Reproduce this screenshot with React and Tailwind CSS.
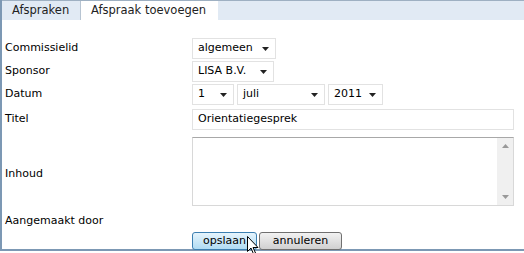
import React from "react";

const font = { fontFamily: '"DejaVu Sans", Verdana, sans-serif' };

function Select({ value, w }) {
  return (
    <div className={`flex h-[21px] items-center justify-between border border-[#e2e2e2] bg-white pl-[5px] pr-[6px] text-[11px] text-black ${w}`}>
      <span>{value}</span>
      <svg width="7" height="4" viewBox="0 0 7 4"><path d="M0 0h7L3.5 4z" fill="#222" /></svg>
    </div>
  );
}

export default function App() {
  return (
    <div className="h-[253px] w-[524px] overflow-hidden bg-white" style={font}>
      <div className="flex h-[251px] flex-col border-b-[2px] border-l-[2px] border-[#7c98b4]">
        <div className="flex h-[20px] items-end border-t border-[#9eb0c2] bg-[#e1eaf4]">
          <div className="flex h-[19px] w-[79px] items-center border-r border-[#b7c4d2] pl-[10px] text-[11.5px] text-[#222]">Afspraken</div>
          <div className="flex h-[19px] w-[137px] items-center bg-white pl-[10px] text-[11.5px] text-[#222]">Afspraak toevoegen</div>
        </div>
        <div className="flex flex-col pl-[3px] pt-[17px] text-[11px] text-black">
          <div className="flex h-[23px] items-center">
            <div className="w-[187px]">Commissielid</div>
            <Select value="algemeen" w="w-[84px]" />
          </div>
          <div className="flex h-[23px] items-center">
            <div className="w-[187px]">Sponsor</div>
            <Select value="LISA B.V." w="w-[82px]" />
          </div>
          <div className="flex h-[23px] items-center">
            <div className="w-[187px]">Datum</div>
            <div className="flex gap-[3px]">
              <Select value="1" w="w-[42px]" />
              <Select value="juli" w="w-[88px]" />
              <Select value="2011" w="w-[55px]" />
            </div>
          </div>
          <div className="flex h-[26px] items-center">
            <div className="w-[187px]">Titel</div>
            <div className="flex h-[21px] w-[322px] items-center border border-[#e2e2e2] pl-[5px]">Orientatiegesprek</div>
          </div>
          <div className="flex h-[79px] items-center">
            <div className="w-[187px] pt-[6px]">Inhoud</div>
            <div className="flex h-[69px] w-[322px] border border-[#d8d8d8] border-t-[#a8a8a8]">
              <div className="flex-1" />
              <div className="flex w-[16px] flex-col items-center justify-between bg-[#f0f0f0] py-[6px]">
                <svg width="7" height="4" viewBox="0 0 7 4"><path d="M0 4h7L3.5 0z" fill="#999" /></svg>
                <svg width="7" height="4" viewBox="0 0 7 4"><path d="M0 0h7L3.5 4z" fill="#999" /></svg>
              </div>
            </div>
          </div>
          <div className="flex h-[21px] items-center">
            <div>Aangemaakt door</div>
          </div>
          <div className="flex gap-[2px] pl-[187px]">
            <div className="relative flex h-[18px] w-[65px] items-center justify-center rounded-[3px] border border-[#3c7fb1] bg-gradient-to-b from-[#e5f4fc] to-[#b0dcf3] text-[11px]">
              opslaan
              <svg className="absolute left-[54px] top-[3px]" width="12" height="19" viewBox="0 0 12 19">
                <path d="M0.5 0.5v15l3.5-3.5 2.5 6 2-1-2.5-5.5h5z" fill="white" stroke="black" strokeWidth="1" />
              </svg>
            </div>
            <div className="flex h-[18px] w-[83px] items-center justify-center rounded-[3px] border border-[#707070] bg-gradient-to-b from-[#f2f2f2] to-[#d0d0d0] text-[11px]">annuleren</div>
          </div>
        </div>
      </div>
    </div>
  );
}
